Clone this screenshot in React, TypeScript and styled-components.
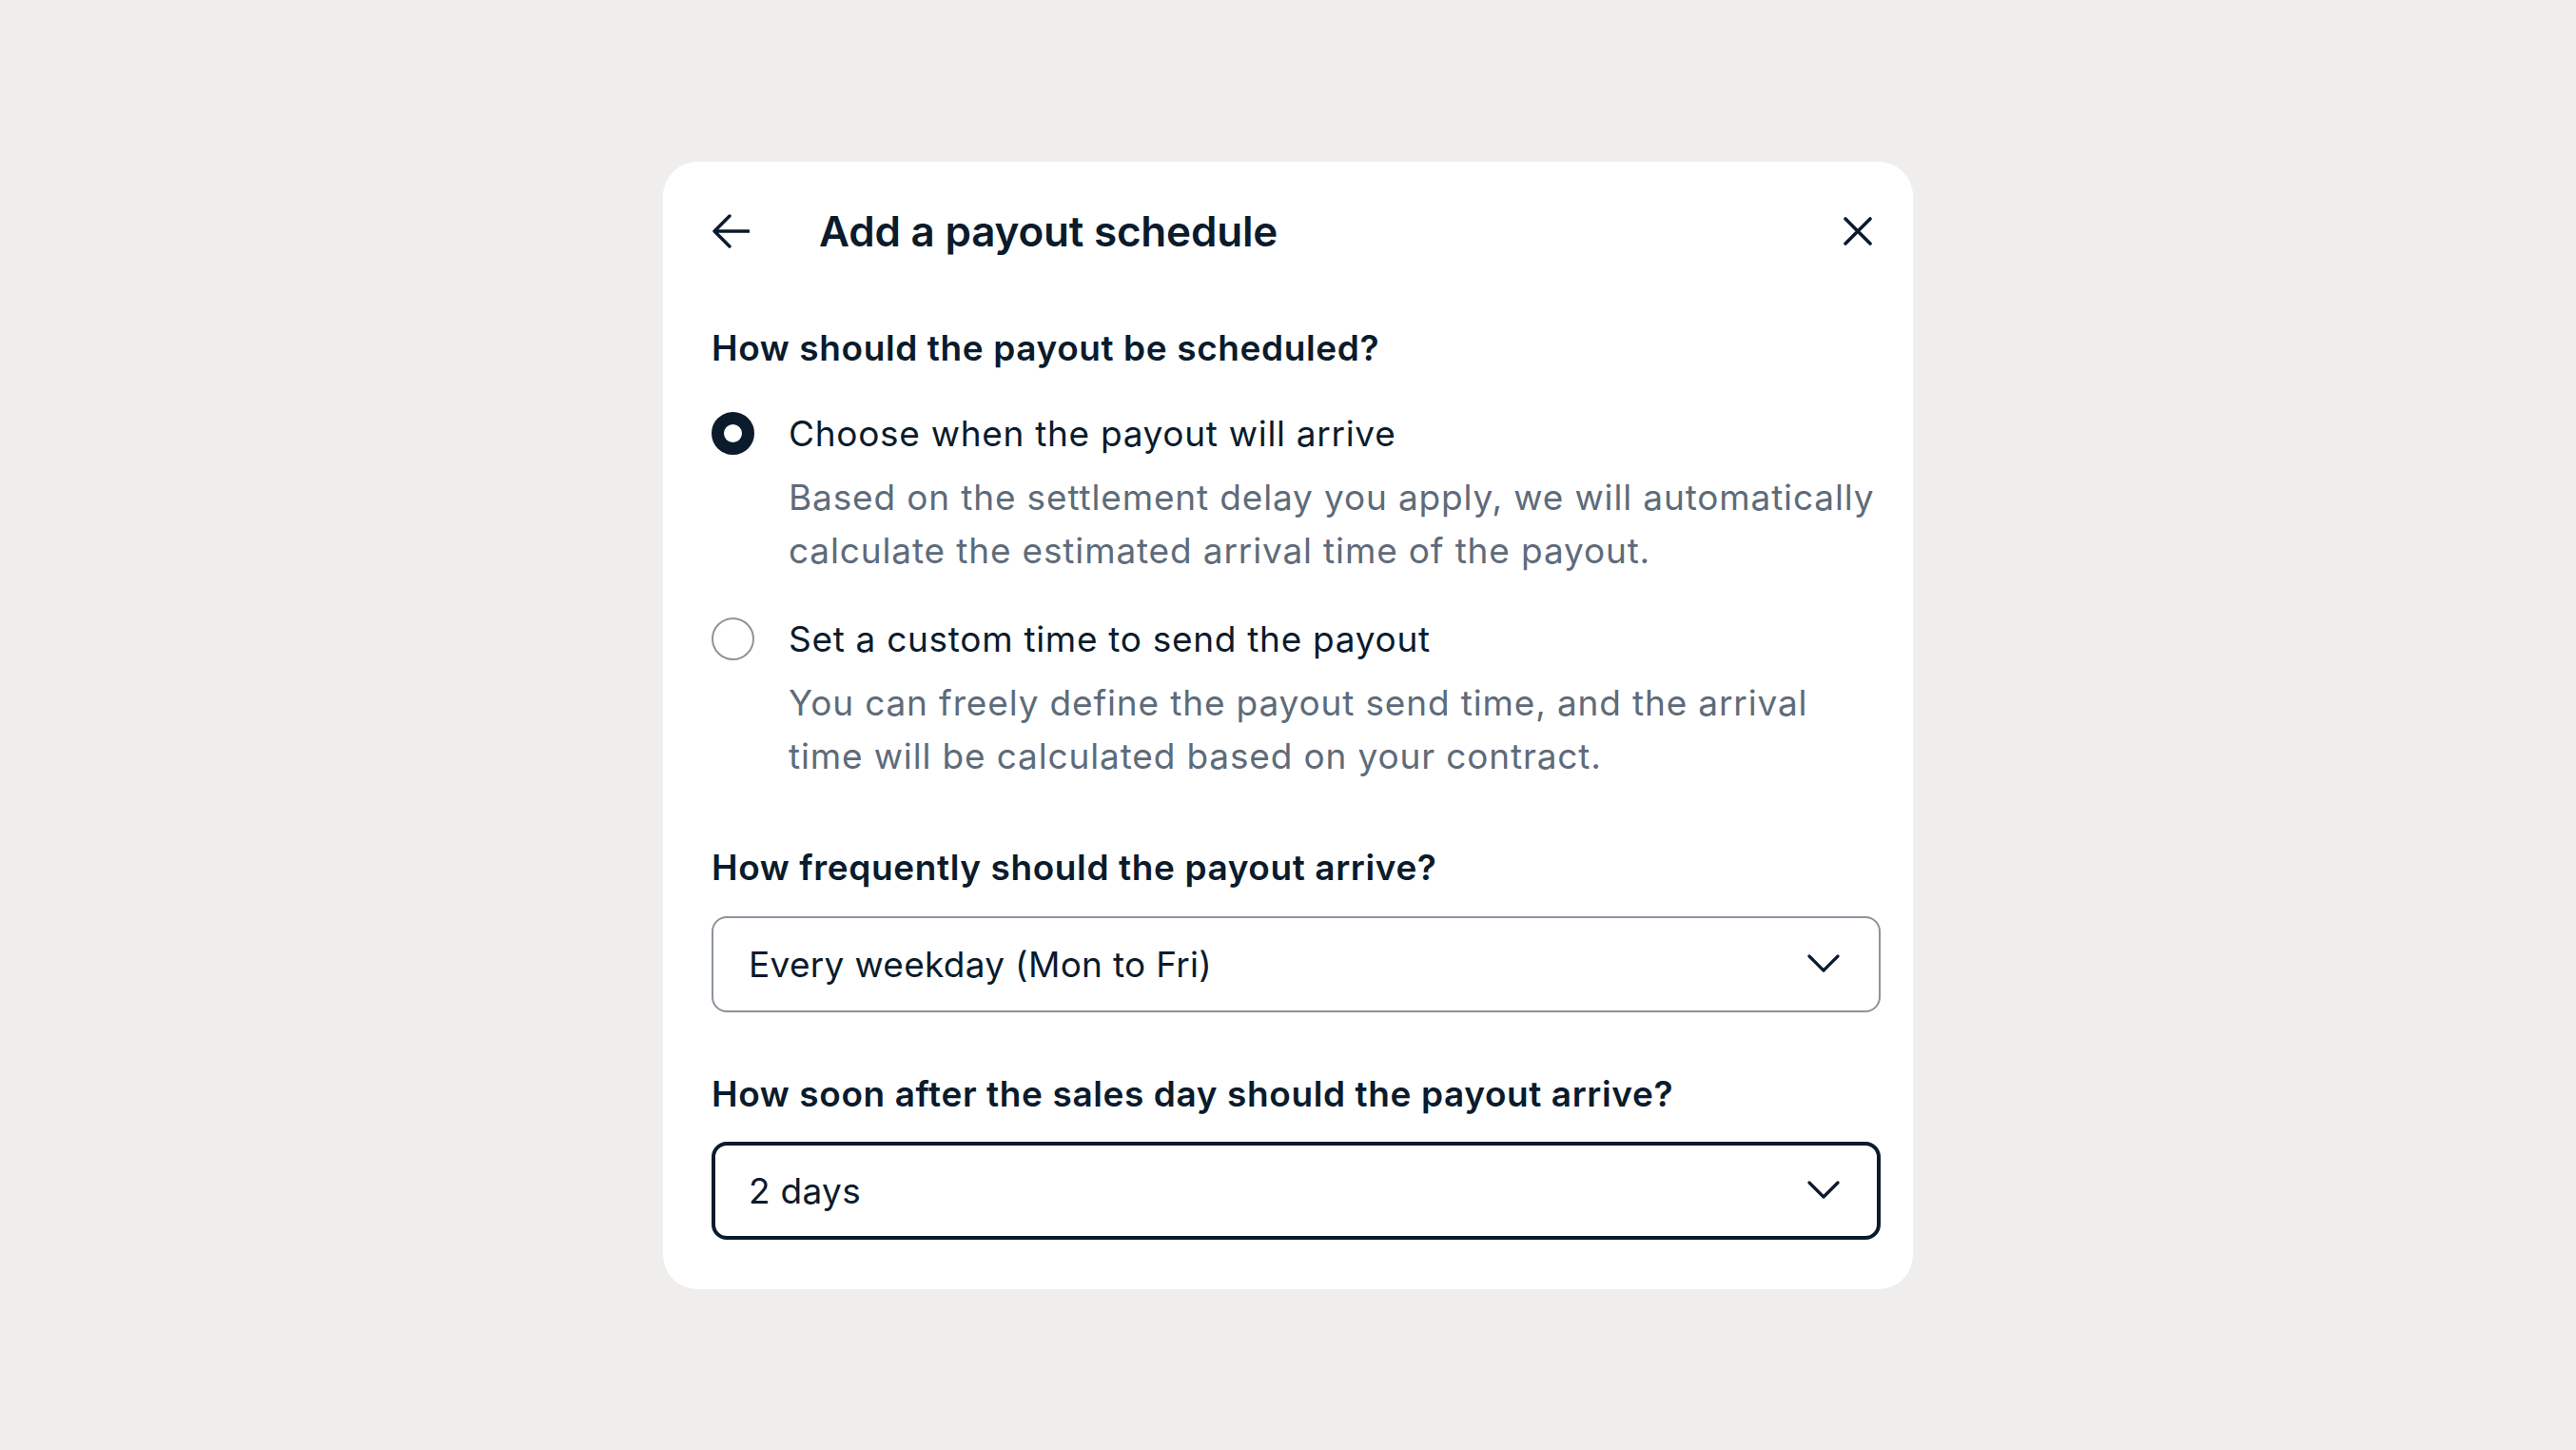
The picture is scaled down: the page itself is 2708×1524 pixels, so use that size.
import React, { useState } from "react";
import styled, { createGlobalStyle } from "styled-components";

const GlobalStyle = createGlobalStyle`
  html, body {
    margin: 0;
    padding: 0;
    background: #efeeec;
  }
  body {
    font-family: Inter, "Noto Sans", "Liberation Sans", sans-serif;
    color: #0b1b2c;
  }
`;

const Page = styled.div`
  min-height: 100vh;
  display: flex;
  align-items: center;
  justify-content: center;
`;

const Card = styled.div`
  width: 1314px;
  box-sizing: border-box;
  background: #fff;
  border-radius: 36px;
  padding: 45px 34px 52px 51px;
  display: flex;
  flex-direction: column;
`;

const Header = styled.div`
  height: 56px;
  display: flex;
  align-items: center;
`;

const IconButton = styled.button<{ $inset?: number }>`
  border: none;
  background: none;
  padding: 0;
  margin-right: ${(p) => p.$inset ?? 0}px;
  color: #0b1b2c;
  display: flex;
  align-items: center;
  justify-content: center;
  cursor: pointer;
`;

const Title = styled.h1`
  margin: 0 0 0 73px;
  flex: 1;
  font-size: 44px;
  line-height: 56px;
  font-weight: 600;
  letter-spacing: -0.2px;
`;

const Question = styled.h2<{ $top: number }>`
  margin: ${(p) => p.$top}px 0 0;
  font-size: 37px;
  line-height: 44px;
  font-weight: 600;
  letter-spacing: 0.6px;
`;

const OptionList = styled.div`
  margin-top: 40px;
  display: flex;
  flex-direction: column;
  gap: 37px;
`;

const Option = styled.label`
  display: grid;
  grid-template-columns: 45px 1fr;
  column-gap: 36px;
  cursor: pointer;
`;

const Radio = styled.span<{ $checked: boolean }>`
  width: 45px;
  height: 45px;
  box-sizing: border-box;
  margin-top: 5px;
  border-radius: 50%;
  border: ${(p) => (p.$checked ? "13px solid #0b1b2c" : "2px solid #8d949b")};
  background: #fff;
`;

const OptionText = styled.div`
  display: flex;
  flex-direction: column;
  gap: 11px;
`;

const OptionLabel = styled.span`
  font-size: 37px;
  line-height: 56px;
  letter-spacing: 0.7px;
`;

const OptionHint = styled.span`
  font-size: 37px;
  line-height: 56px;
  letter-spacing: 0.85px;
  color: #5e6b7a;
`;

const Select = styled.div<{ $focused?: boolean }>`
  margin-top: ${(p) => (p.$focused ? 28 : 29)}px;
  height: ${(p) => (p.$focused ? 103 : 101)}px;
  box-sizing: border-box;
  border: ${(p) => (p.$focused ? "4px solid #0b1b2c" : "2px solid #8b949c")};
  border-radius: 16px;
  padding: 0 ${(p) => (p.$focused ? 39 : 41)}px 0 ${(p) => (p.$focused ? 35 : 37)}px;
  display: flex;
  align-items: center;
  justify-content: space-between;
  font-size: 37px;
  letter-spacing: 0.3px;
  cursor: pointer;
`;

const ArrowLeft = () => (
  <svg width="40" height="36" viewBox="0 0 40 36" fill="none">
    <path
      d="M39 18H3M19 2L3 18l16 16"
      stroke="currentColor"
      strokeWidth="3.4"
      strokeLinecap="round"
      strokeLinejoin="round"
    />
  </svg>
);

const Close = () => (
  <svg width="30" height="30" viewBox="0 0 30 30" fill="none">
    <path
      d="M2 2l26 26M28 2L2 28"
      stroke="currentColor"
      strokeWidth="3.6"
      strokeLinecap="round"
    />
  </svg>
);

const Chevron = () => (
  <svg width="34" height="20" viewBox="0 0 34 20" fill="none">
    <path
      d="M2 2l15 15L32 2"
      stroke="#0b1b2c"
      strokeWidth="3.2"
      strokeLinecap="round"
      strokeLinejoin="round"
    />
  </svg>
);

const options = [
  {
    id: "arrival",
    label: "Choose when the payout will arrive",
    hint: "Based on the settlement delay you apply, we will automatically calculate the estimated arrival time of the payout.",
  },
  {
    id: "custom",
    label: "Set a custom time to send the payout",
    hint: "You can freely define the payout send time, and the arrival time will be calculated based on your contract.",
  },
];

function App() {
  const [mode, setMode] = useState("arrival");

  return (
    <Page>
      <GlobalStyle />
      <Card>
        <Header>
          <IconButton aria-label="Back">
            <ArrowLeft />
          </IconButton>
          <Title>Add a payout schedule</Title>
          <IconButton aria-label="Close" $inset={9}>
            <Close />
          </IconButton>
        </Header>

        <Question $top={73}>How should the payout be scheduled?</Question>
        <OptionList>
          {options.map((o) => (
            <Option key={o.id} onClick={() => setMode(o.id)}>
              <Radio $checked={mode === o.id} />
              <OptionText>
                <OptionLabel>{o.label}</OptionLabel>
                <OptionHint>{o.hint}</OptionHint>
              </OptionText>
            </Option>
          ))}
        </OptionList>

        <Question $top={67}>How frequently should the payout arrive?</Question>
        <Select>
          <span>Every weekday (Mon to Fri)</span>
          <Chevron />
        </Select>

        <Question $top={64}>How soon after the sales day should the payout arrive?</Question>
        <Select $focused>
          <span>2 days</span>
          <Chevron />
        </Select>
      </Card>
    </Page>
  );
}

export default App;
